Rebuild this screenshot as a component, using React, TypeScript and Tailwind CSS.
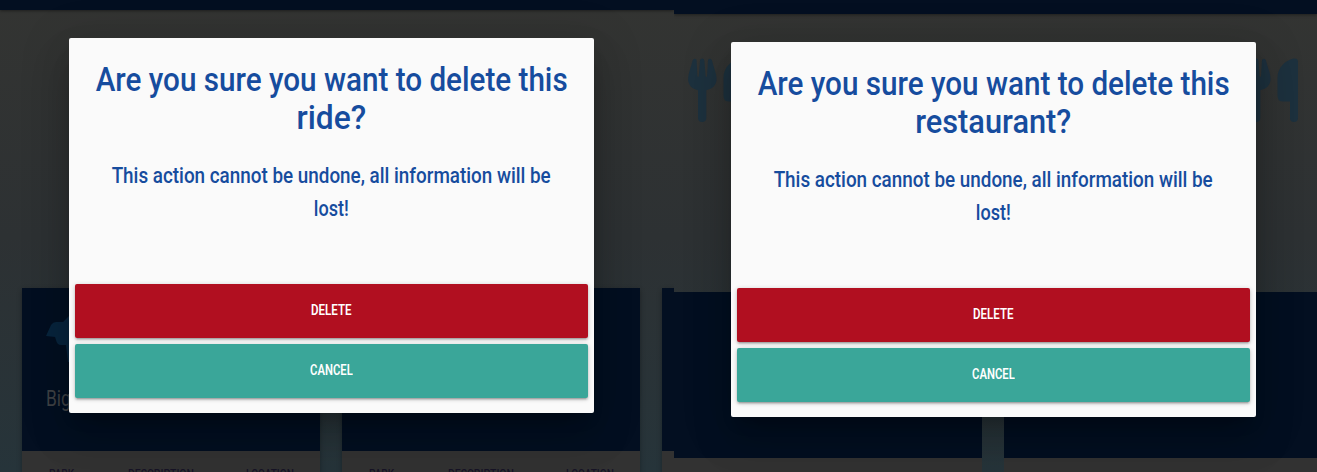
import React from 'react';

type LineProps = { text: string; className: string };

function Line({ text, className }: LineProps) {
  return (
    <span className="flex justify-center whitespace-nowrap">
      <span className={`block origin-center ${className}`}>{text}</span>
    </span>
  );
}

function Cutlery() {
  return (
    <svg viewBox="0 0 56 64" className="h-16 w-14 fill-[#1d313e]">
      <path d="M4.6 2.5Q5.2 .5 7 .7 8.7 .8 8.6 2.5L9.4 18Q10.1 19.8 10.8 18L12 2.5Q12.2 .5 14.2 .5T16.4 2.5L17.6 18Q18.3 19.8 19 18L20 2.5Q20.2 .8 21.6 .7 23.4 .5 24 2.5C25.4 9 28.6 15 28.6 21C28.6 27 24.5 31 18.3 32.2V60Q18.3 64 14.2 64T10 60V32.2C4 31 .1 27 .1 21C.1 15 3.2 9 4.6 2.5Z" />
      <path d="M56 4V60Q56 64 52 64T48 60V43.5H41Q35.5 43.5 35.5 38V20C35.5 10 43 2.5 51.5 .6Q56 0 56 4Z" />
    </svg>
  );
}

function Dialog({ subject, subjectClass }: { subject: string; subjectClass: string }) {
  return (
    <section
      role="dialog"
      className="relative flex h-[375px] w-[525px] shrink-0 flex-col rounded-[2px] bg-[#fafafa] px-1.5 pt-[22px] text-[#164c9e] shadow-[0_24px_38px_3px_rgba(0,0,0,0.14),0_9px_46px_8px_rgba(0,0,0,0.12),0_11px_15px_-7px_rgba(0,0,0,0.2)]"
    >
      <h4 className="text-[34px] leading-[38px] font-medium">
        <Line text="Are you sure you want to delete this" className="scale-x-[0.872]" />
        <Line text={subject} className={subjectClass} />
      </h4>
      <p className="mt-[23px] text-[22px] leading-[33px] font-medium">
        <Line text="This action cannot be undone, all information will be" className="scale-x-[0.857]" />
        <Line text="lost!" className="scale-x-[0.82]" />
      </p>
      <div className="mt-auto mb-[15px] flex flex-col gap-1.5 text-[15px] font-semibold text-white">
        <button className="h-[54px] rounded-[2px] bg-[#b10f20] pb-0.5 shadow-[0_2px_2px_rgba(0,0,0,0.14),0_3px_1px_-2px_rgba(0,0,0,0.12),0_1px_5px_rgba(0,0,0,0.2)]">
          <Line text="DELETE" className="scale-x-[0.77]" />
        </button>
        <button className="h-[54px] rounded-[2px] bg-[#3aa699] pb-0.5 shadow-[0_2px_2px_rgba(0,0,0,0.14),0_3px_1px_-2px_rgba(0,0,0,0.12),0_1px_5px_rgba(0,0,0,0.2)]">
          <Line text="CANCEL" className="scale-x-[0.75]" />
        </button>
      </div>
    </section>
  );
}

function RideCard({ name }: { name?: string }) {
  return (
    <article className="h-[184px] w-[298px] shrink-0 bg-[#323232] shadow-[0_2px_5px_rgba(0,0,0,0.3)]">
      <div className="h-[163px] bg-[#030f21] px-6 pt-[28px] text-[#3f4245]">
        {name && (
          <>
            <svg viewBox="0 0 60 46" className="h-[46px] w-[60px] fill-[#08253e]">
              <path d="M0 20 5 9Q7 6 10 6H17L23 0H60V46H22L20 29H15Q11 29 10 24L9 21Z" />
            </svg>
            <div className="mt-[21px] origin-left scale-x-[0.79] text-[22px] leading-[32px]">{name}</div>
          </>
        )}
      </div>
      <div className="flex justify-between px-[27px] pt-4 text-[12px] leading-[14px] font-medium text-[#171426]">
        <span className="w-[26px] origin-left scale-x-[0.84]">PARK</span>
        <span className="w-[65px] origin-left scale-x-[0.87]">DESCRIPTION</span>
        <span className="w-[47px] origin-left scale-x-[0.84]">LOCATION</span>
      </div>
    </article>
  );
}

export default function App() {
  return (
    <main className="flex h-[472px] w-[1317px] overflow-hidden font-['Roboto',sans-serif]">
      <div className="relative h-full w-[674px] shrink-0 overflow-hidden bg-linear-to-b from-[#333432] via-[#2d3133] to-[#26343a]">
        <div className="h-2.5 bg-[#030f21] shadow-[0_1px_3px_rgba(0,0,0,0.4)]" />
        <div className="mt-[278px] flex gap-[22px] pl-[22px]">
          <RideCard name="Big Thunder" />
          <RideCard />
          <RideCard />
        </div>
        <div className="absolute top-[38px] left-[69px]">
          <Dialog subject="ride?" subjectClass="scale-x-[0.935]" />
        </div>
      </div>
      <div className="relative h-full w-[643px] shrink-0 overflow-hidden bg-linear-to-b from-[#333432] via-[#2d3133] to-[#26343a]">
        <div className="h-3.5 bg-[#030f21] shadow-[0_1px_3px_rgba(0,0,0,0.4)]" />
        <div className="mt-11 flex justify-between pr-[19px] pl-3.5">
          <Cutlery />
          <Cutlery />
        </div>
        <div className="mt-[170px] flex gap-[22px]">
          <div className="h-[180px] w-[308px] shrink-0 bg-[#323232]">
            <div className="h-[166px] bg-[#030f21]" />
          </div>
          <div className="h-[180px] grow bg-[#323232]">
            <div className="h-[166px] bg-[#030f21]" />
          </div>
        </div>
        <div className="absolute top-[42px] left-[57px]">
          <Dialog subject="restaurant?" subjectClass="scale-x-[0.905]" />
        </div>
      </div>
    </main>
  );
}
